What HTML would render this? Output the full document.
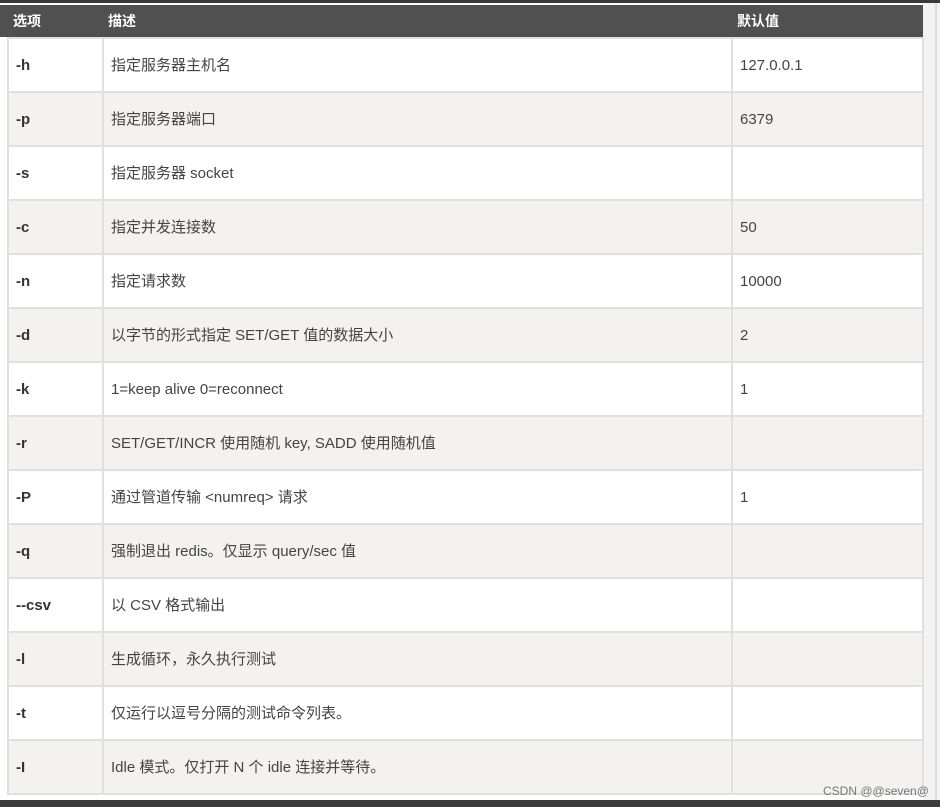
<!DOCTYPE html>
<html><head><meta charset="utf-8"><style>
body{margin:0;width:940px;height:807px;background:#fff;position:relative;overflow:hidden;font-family:"Liberation Sans","Noto Sans CJK SC",sans-serif;}
.top{position:absolute;left:0;top:0;width:940px;height:3px;background:#3a3a3a}
.hl{position:absolute;left:0;top:5px;width:10px;height:32px;background:#505050}
.right{position:absolute;left:923px;top:3px;width:17px;height:797px;background:#f3f3f3}
.rline{position:absolute;left:935px;top:3px;width:2px;height:797px;background:#dcdcdc}
.bot{position:absolute;left:0;top:800px;width:940px;height:7px;background:#3c3c3c}
table{position:absolute;left:7px;top:5px;border-collapse:collapse;width:915px;table-layout:fixed}
th{background:#505050;color:#fff;height:32px;text-align:left;font-size:14px;font-weight:bold;padding:0 0 0 5px;border:none;vertical-align:middle}
td{height:50px;border:2px solid #e0e0e0;padding:2px 0 0 7px;font-size:15px;color:#444;vertical-align:middle;line-height:20px}
td:first-child{font-weight:bold;color:#333}
tr:nth-child(odd) td{background:#f3f2ef}
.wm{position:absolute;left:823px;top:784px;font-size:12px;color:#777}
</style></head><body>
<div class="top"></div><div class="hl"></div><div class="right"></div><div class="rline"></div>
<table>
<colgroup><col style="width:95px"><col style="width:629px"><col style="width:191px"></colgroup>
<tr><th>选项</th><th>描述</th><th>默认值</th></tr>
<tr><td>-h</td><td>指定服务器主机名</td><td>127.0.0.1</td></tr>
<tr><td>-p</td><td>指定服务器端口</td><td>6379</td></tr>
<tr><td>-s</td><td>指定服务器 socket</td><td></td></tr>
<tr><td>-c</td><td>指定并发连接数</td><td>50</td></tr>
<tr><td>-n</td><td>指定请求数</td><td>10000</td></tr>
<tr><td>-d</td><td>以字节的形式指定 SET/GET 值的数据大小</td><td>2</td></tr>
<tr><td>-k</td><td>1=keep alive 0=reconnect</td><td>1</td></tr>
<tr><td>-r</td><td>SET/GET/INCR 使用随机 key, SADD 使用随机值</td><td></td></tr>
<tr><td>-P</td><td>通过管道传输 &lt;numreq&gt; 请求</td><td>1</td></tr>
<tr><td>-q</td><td>强制退出 redis。仅显示 query/sec 值</td><td></td></tr>
<tr><td>--csv</td><td>以 CSV 格式输出</td><td></td></tr>
<tr><td>-l</td><td>生成循环，永久执行测试</td><td></td></tr>
<tr><td>-t</td><td>仅运行以逗号分隔的测试命令列表。</td><td></td></tr>
<tr><td>-I</td><td>Idle 模式。仅打开 N 个 idle 连接并等待。</td><td></td></tr>
</table>
<div class="wm">CSDN @@seven@</div>
<div class="bot"></div>
</body></html>
